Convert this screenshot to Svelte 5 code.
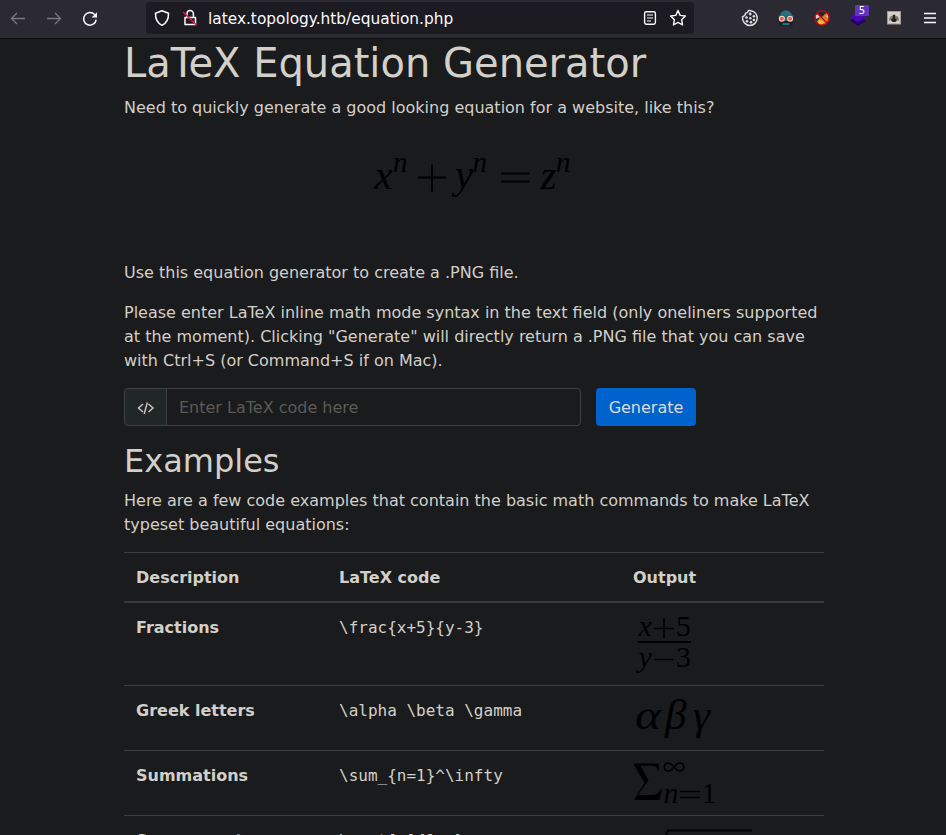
<script>
  const rows = [
    { name: 'Fractions', code: '\\frac{x+5}{y-3}', kind: 'frac', h: 82 },
    { name: 'Greek letters', code: '\\alpha \\beta \\gamma', kind: 'greek', h: 65 },
    { name: 'Summations', code: '\\sum_{n=1}^\\infty', kind: 'sum', h: 65 },
    { name: 'Square root', code: '\\sqrt[n]{1+x}', kind: 'root', h: 75 }
  ];
</script>

<div class="window">
  <header>
    <div class="nav">
      <svg width="16" height="16" viewBox="0 0 16 16" class="dim"><path d="M15 7.5H1.6M7 2 1.5 7.5 7 13" /></svg>
      <svg width="16" height="16" viewBox="0 0 16 16" class="dim"><path d="M1 7.5h13.4M9 2 14.5 7.5 9 13" /></svg>
      <svg width="16" height="16" viewBox="0 0 16 16"><path d="M12.6 3.6A6.3 6.3 0 1 0 14.2 8.6" stroke-width="1.5" /><path d="M15 1.2v5.2H9.6z" fill="#fbfbfe" stroke="none" /></svg>
    </div>
    <div class="url">
      <svg width="16" height="18" viewBox="0 0 16 18"><path d="M8 1.700 14.500 4.200C14.700 10 12.700 14 8 16.300 3.300 14 1.300 10 1.500 4.200z" stroke-width="1.500" stroke-linejoin="round" /></svg>
      <svg class="lock" width="16" height="18" viewBox="0 0 16 18"><path d="M5 8V4.800a3.200 3.200 0 0 1 6.400 0V8M3 8.500h10.500v7H3z" stroke-width="1.500" stroke-linejoin="round" /><path d="M1.200 3 14.500 16.300" stroke="#e8174b" stroke-width="1.600" /></svg>
      <span class="addr">latex.topology.htb/equation.php</span>
      <svg width="16" height="16" viewBox="0 0 16 16"><rect x="2.600" y="1.700" width="10.800" height="12.600" rx="1.700" stroke-width="1.400" /><path d="M5 5h6M5 8h6M5 11h4" stroke-width="1.200" /></svg>
      <svg class="star" width="18" height="18" viewBox="0 0 18 18"><path d="m9 1.500 2.200 4.900 5.200.6-3.800 3.700 1 5.300L9 13.400 4.400 16l1-5.300L1.600 7l5.200-.6z" stroke-linejoin="round" stroke-width="1.400" /></svg>
    </div>
    <div class="ext">
      <svg width="18" height="18" viewBox="0 0 18 18"><path d="M7.600 1.600C7 3 6 4.400 4.600 4.300 4.500 6 3 7.200 1.600 7.600.8 12 4.400 16.400 9 16.400A7.400 7.400 0 0 0 10 1.700c-.8-.2-1.600-.2-2.400-.1z" stroke="#dededf" stroke-width="1.500" /><g fill="#dededf" stroke="none"><circle cx="9.200" cy="5" r="1.400" /><circle cx="12.900" cy="7.200" r="1.300" /><circle cx="5.500" cy="8.500" r="1.300" /><circle cx="9.400" cy="9.200" r="1.200" /><circle cx="6" cy="12.300" r="1.300" /><circle cx="10" cy="13.300" r="1.300" /><circle cx="12.900" cy="11" r="1.300" /></g></svg>
      <svg width="18" height="18" viewBox="0 0 18 18"><g stroke="none"><path d="M3 7C3 3.500 6 1.500 9 1.500S15 3.500 15 7z" fill="#28717f" /><path d="M1.500 6.300h15v2h-15z" fill="#28616f" /><path d="M4 8h10v4H4z" fill="#28616f" /><path d="M2.500 12.500h13v4h-13z" fill="#171c25" /><circle cx="4.900" cy="9.700" r="3" fill="#ffd4c4" /><circle cx="13.100" cy="9.700" r="3" fill="#ffd4c4" /><circle cx="4.900" cy="9.700" r="1.900" fill="#e55a4d" /><circle cx="13.100" cy="9.700" r="1.900" fill="#e55a4d" /><path d="M5.500 14h7v2h-7z" fill="#28717f" /></g></svg>
      <svg width="18" height="18" viewBox="0 0 18 18"><g stroke="none"><path d="M7 8c3 1 5-5 8-4 1.500 4 .5 9-3 11-4 2-6 0-7-3z" fill="#df7d24" /><path d="M4 12c3-2 5-1 7 1l-2 2.500H6z" fill="#f3b54b" /><path d="M5 4h5v3H6z" fill="#242226" /><path d="M2 6 5 5.500 7 8l-4 2zM12.500 7l3-1v3z" fill="#d6d1ce" /></g><circle cx="9" cy="9" r="7.200" stroke="#c60808" stroke-width="1.300" /><path d="m4 4 10 10" stroke="#c60808" stroke-width="1.300" /></svg>
      <div class="stack">
        <svg width="18" height="18" viewBox="0 0 18 18"><path d="m1 11.500 8-4 8 4-8 5.500z" fill="#22006c" stroke="none" /><path d="m1 8 8-6 8 6-8 5.600z" fill="#4b08b1" stroke="none" /></svg>
        <span>5</span>
      </div>
      <svg width="18" height="18" viewBox="0 0 18 18"><rect x="2.500" y="2.500" width="13" height="12.500" fill="#d7cec6" stroke="#a29a95" stroke-width="1" /><path d="M4 12c0-3 1-5 3-5l2-2 2 2c2 0 3 2 3 5l-2-1-1 2H7l-1-2z" fill="#77756f" stroke="none" /><path d="M8 6h2v3l2 2-2 2H8l-2-2 2-2z" fill="#20221f" stroke="none" /></svg>
      <svg width="14" height="16" viewBox="0 0 14 16"><path d="M1 4.500h12M1 9h12M1 13.500h12" stroke-width="1.300" /></svg>
    </div>
  </header>

  <main>
    <h1>LaTeX Equation Generator</h1>
    <p>Need to quickly generate a good looking equation for a website, like this?</p>
    <svg class="hero math" width="700" height="125" viewBox="124 134 700 125">
      <g class="i" font-size="41"><text x="374.500" y="188">x</text><text x="455" y="187">y</text><text x="540.500" y="188">z</text></g>
      <g class="i" font-size="29"><text x="393" y="171">n</text><text x="472.500" y="171">n</text><text x="556" y="171">n</text></g>
      <path d="M418 176.500h28M432 163.500v27.500M501 172.500h28.500M501 180.500h28.500" stroke-width="1.900" />
    </svg>
    <p>Use this equation generator to create a .PNG file.</p>
    <p>Please enter LaTeX inline math mode syntax in the text field (only oneliners supported at the moment). Clicking "Generate" will directly return a .PNG file that you can save with Ctrl+S (or Command+S if on Mac).</p>
    <div class="form">
      <div class="prefix"><svg width="18" height="14" viewBox="0 0 18 14"><path d="M6 3 1.500 7 6 11M11.500 3 16 7l-4.500 4M10.300 1.500 7.200 13" stroke="#c9c4bb" stroke-width="1.500" /></svg></div>
      <input placeholder="Enter LaTeX code here" aria-label="LaTeX code" />
      <button>Generate</button>
    </div>
    <h2>Examples</h2>
    <p>Here are a few code examples that contain the basic math commands to make LaTeX typeset beautiful equations:</p>
    <table>
      <thead><tr><th class="c1">Description</th><th class="c2">LaTeX code</th><th>Output</th></tr></thead>
      <tbody>
        {#each rows as row}
          <tr style:height="{row.h}px">
            <th>{row.name}</th>
            <td><code>{row.code}</code></td>
            <td class="out">
              {#if row.kind === 'frac'}
                <svg class="math" width="120" height="70" viewBox="633 610 120 70">
                  <g class="i" font-size="30"><text x="638.500" y="636">x</text><text x="638.500" y="667">y</text></g>
                  <g font-size="30"><text x="676" y="636">5</text><text x="676" y="667">3</text></g>
                  <path d="M654 628.500h20M664 618.500v20M654.500 659.500h19" stroke-width="1.600" /><path d="M637.500 642h53.500" stroke-width="2" />
                </svg>
              {:else if row.kind === 'greek'}
                <svg class="math" width="120" height="52" viewBox="633 693 120 52">
                  <g class="i" font-size="43"><text x="635" y="729" textLength="26" lengthAdjust="spacingAndGlyphs">α</text><text x="665" y="729">β</text><text x="693" y="729">γ</text></g>
                </svg>
              {:else if row.kind === 'sum'}
                <svg class="math" width="120" height="52" viewBox="633 758 120 52">
                  <path class="fill" d="M634 763.500h25v7.500h-1c-.8-4-2.500-5.300-6.500-5.300H640.500l8 14.500L638 795h13c5.500 0 8-1.800 10-6h1l-2.500 11h-25v-1L644.500 783 634 765z" />
                  <text class="i" font-size="30" x="663.500" y="803">n</text>
                  <text font-size="30" x="701.500" y="803">1</text>
                  <path d="M674 767c-2.500-3-4-4-6-4-5 0-5 8 0 8 2.500 0 4-1.500 6-4s3.500-4 6-4c5 0 5 8 0 8-2 0-3.500-1-6-4z" stroke-width="1.600" />
                  <path d="M680 791.500h20M680 797.500h20" stroke-width="1.500" />
                </svg>
              {:else}
                <svg class="math" width="120" height="60" viewBox="633 823 120 60">
                  <path d="m648 853 6 12 14-34.500h84" stroke-width="1.800" />
                  <text x="672" y="866" font-size="36">1+<tspan class="i">x</tspan></text>
                </svg>
              {/if}
            </td>
          </tr>
        {/each}
      </tbody>
    </table>
  </main>
</div>

<style>
  :global(body) { background: #1a1b1c; }
  .window { height: 835px; overflow: hidden; background: #1a1b1c; color: #d3cfc9; font: 16px/24px "DejaVu Sans", sans-serif; }
  .window * { box-sizing: border-box; }
  svg { fill: none; stroke: #fbfbfe; stroke-width: 1.3; flex: none; display: block; }
  header { height: 39px; background: #2b2a33; border-bottom: 1px solid #0c0c0d; display: flex; align-items: flex-start; }
  .nav { display: flex; gap: 20px; padding: 11px 0 0 10px; width: 146px; }
  .dim { stroke: #77767c; }
  .url { width: 548px; height: 32px; margin-top: 2px; background: #1c1b22; border-radius: 4px; display: flex; align-items: center; padding: 0 7px 0 8px; color: #fbfbfe; }
  .lock { margin: 0 10px 0 12px; }
  .addr { flex: 1; font-size: 15.36px; white-space: nowrap; padding-top: 1px; }
  .star { margin-left: 11px; }
  .ext { display: flex; gap: 18px; padding: 9px 0 0 47px; }
  .stack { position: relative; }
  .stack span { position: absolute; left: 6px; top: -4px; width: 14px; height: 11px; background: #6334bd; color: #fff; font-size: 10px; line-height: 11px; text-align: center; border-radius: 1px; }
  .ext > svg:last-child { margin-left: 2px; }
  main { width: 700px; margin-left: 124px; }
  h1, h2 { font-weight: 400; line-height: 1.2; margin: 0 0 8px; }
  h1 { font-size: 40px; }
  h2 { font-size: 32px; }
  p { margin: 0 0 15px; padding-top: 1px; }
  .math { stroke: #000; overflow: visible; }
  .math text, .math .fill { fill: #000; stroke: none; font-family: "Liberation Serif", serif; }
  .i { font-style: italic; }
  .form { display: flex; height: 38px; margin-bottom: 16px; }
  .prefix { width: 43px; background: #212627; border: 1px solid #3b4042; border-radius: 4px 0 0 4px; display: flex; align-items: center; justify-content: center; padding-top: 2px; }
  input { width: 415px; margin-left: -1px; border: 1px solid #3b4042; border-radius: 0 4px 4px 0; background: transparent; font: inherit; padding: 2px 12px 0; color: inherit; }
  input::placeholder { color: #5c5a56; opacity: 1; }
  button { width: 100px; margin-left: 15px; border: 0; border-radius: 4px; background: #0062cc; color: #dedad5; font: inherit; padding: 2px 0 0; }
  table { width: 700px; border-collapse: separate; border-spacing: 0; table-layout: fixed; }
  th, td { padding: 13px 12px 11px; text-align: left; vertical-align: top; border-top: 1px solid #3a3f41; }
  thead th { height: 51px; border-bottom: 2px solid #343b3c; }
  thead + tbody tr:first-child > * { border-top: 0; }
  .c1 { width: 203px; }
  .c2 { width: 294px; }
  code { font: 16px/24px "DejaVu Sans Mono", monospace; }
  td.out { padding-top: 7px; padding-bottom: 0; }
</style>
